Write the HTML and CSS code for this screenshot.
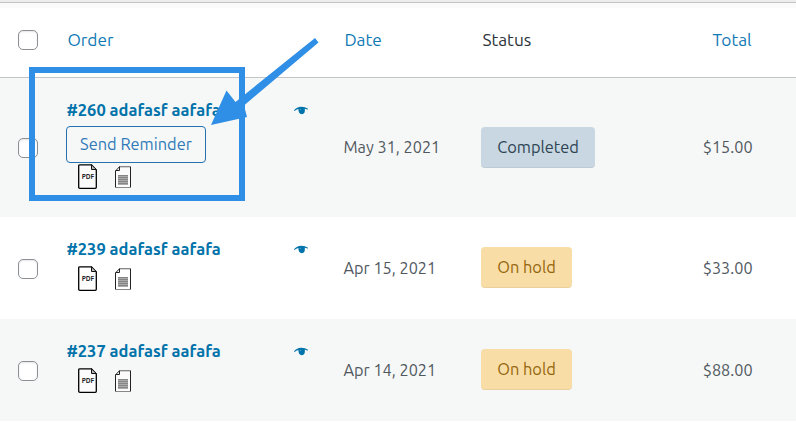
FILE: index.html
```html
<!DOCTYPE html>
<html lang="en">
<head>
<meta charset="utf-8">
<title>Orders</title>
<link rel="stylesheet" href="styles.css">
</head>
<body>
<svg class="sprite" aria-hidden="true">
  <symbol id="pdf" viewBox="0 0 20 26">
    <path d="M2 .8H13.5L18.3 6V23.3Q18.3 24.3 17.3 24.3H2Q.7 24.3 .7 23.3V2Q.7 .8 2 .8Z" fill="#fff" fill-opacity=".65" stroke="#000" stroke-width="1.3"/>
    <path d="M13.5 .8V5.5H18.3Z" fill="#bbb" stroke="#111" stroke-width="1"/>
  </symbol>
  <symbol id="doc" viewBox="0 0 17 23">
    <path d="M4.5 .7H15.5V21.5H.5V5Z" fill="#fff" fill-opacity=".5" stroke="#222" stroke-width="1"/>
    <path d="M4.5 .7V4.5H.6" fill="none" stroke="#222" stroke-width="1"/>
    <path d="M5 .5H16M0 21.5H16" stroke="#888" stroke-width="1"/>
    <path d="M3 9H13V19H3Z" fill="#aaa"/>
    <path d="M3 9.5H13M3 11.5H13M3 13.5H13M3 15.5H13M3 17.5H13" stroke="#858585"/>
  </symbol>
  <symbol id="eye" viewBox="0 0 14 9">
    <path d="M0 4.2Q3 .8 7 .7Q11 .6 14 2.8L13.6 3.8Q12 2.8 10.8 2.7Q11.5 8.1 7.8 8.2Q4.3 8.1 4.4 3Q2.3 3.5 .5 4.9Z" fill="#0073aa"/>
    <circle cx="6.3" cy="3.3" r=".5" fill="#8fc0d9"/>
  </symbol>
</svg>
<main class="orders">
  <div class="topbar"></div>
  <header class="row head">
    <span class="check"></span>
    <a class="h-order">Order</a>
    <a class="h-date">Date</a>
    <span class="h-status">Status</span>
    <a class="h-total">Total</a>
  </header>
  <section class="row tall striped">
    <span class="check"></span>
    <div class="order">
      <div class="title"><strong>#260 adafasf aafafa</strong><svg class="eye"><use href="#eye"/></svg></div>
      <a class="button">Send Reminder</a>
      <div class="docs"><span class="pdf"><svg><use href="#pdf"/></svg><b>PDF</b></span><svg class="doc"><use href="#doc"/></svg></div>
    </div>
    <span class="date">May 31, 2021</span>
    <div class="status"><span class="badge completed">Completed</span></div>
    <span class="total">$15.00</span>
  </section>
  <section class="row">
    <span class="check"></span>
    <div class="order">
      <div class="title"><strong>#239 adafasf aafafa</strong><svg class="eye"><use href="#eye"/></svg></div>
      <div class="docs"><span class="pdf"><svg><use href="#pdf"/></svg><b>PDF</b></span><svg class="doc"><use href="#doc"/></svg></div>
    </div>
    <span class="date">Apr 15, 2021</span>
    <div class="status"><span class="badge hold">On hold</span></div>
    <span class="total">$33.00</span>
  </section>
  <section class="row striped">
    <span class="check"></span>
    <div class="order">
      <div class="title"><strong>#237 adafasf aafafa</strong><svg class="eye"><use href="#eye"/></svg></div>
      <div class="docs"><span class="pdf"><svg><use href="#pdf"/></svg><b>PDF</b></span><svg class="doc"><use href="#doc"/></svg></div>
    </div>
    <span class="date">Apr 14, 2021</span>
    <div class="status"><span class="badge hold">On hold</span></div>
    <span class="total">$88.00</span>
  </section>
  <svg class="callout" viewBox="0 0 796 426" aria-hidden="true">
    <rect x="32" y="70" width="210" height="128" fill="none" stroke="#2f8fe6" stroke-width="6"/>
    <path d="M315 38L318.5 42.5L244 105.5L247 117L211 125L226.5 90.5L235.5 102Z" fill="#2f8fe6"/>
  </svg>
</main>
</body>
</html>
```
FILE: styles.css
```css
* { box-sizing: border-box; }
body {
  margin: 0;
  background: #fff;
  color: #50575e;
  font: 16.25px/22px Ubuntu, "Noto Sans", sans-serif;
}
.sprite { position: absolute; width: 0; height: 0; }
.orders { position: relative; width: 796px; height: 426px; overflow: hidden; }
.topbar { height: 3px; background: #ececed; border-bottom: 1px solid #c3c4c7; }
.row {
  display: grid;
  grid-template-columns: 49px 276px 138px 190px 81.6px;
  align-items: center;
  height: 102px;
  padding-left: 18px;
}
.tall { height: 139px; }
.striped { background: #f6f7f7; }
.head {
  height: 75px;
  padding-bottom: 1px;
  border-bottom: 1px solid #c3c4c7;
  background: linear-gradient(#fbfbfc 0 5px, #fff 5px);
  color: #2c3338;
  font-size: 17.3px;
}
.head a { color: #0f7ab5; }
.h-order { padding-left: .4px; }
.h-date, .h-status { padding-left: 1.4px; }
.h-total { padding-right: 1px; text-align: right; }
.check {
  width: 20px;
  height: 20px;
  margin-top: 1px;
  border: 1px solid #8c8f94;
  border-radius: 5px;
  background: #fff;
  box-shadow: inset 0 1px 2px rgba(0, 0, 0, .1);
}
.order { align-self: start; padding-top: 21px; }
.title { display: flex; align-items: center; justify-content: space-between; height: 22px; padding-right: 35px; }
.title strong { margin-left: -.6px; color: #0073aa; font-size: 16.5px; }
.eye { width: 14px; height: 9px; }
.button {
  display: flex;
  align-items: center;
  justify-content: center;
  width: 140px;
  height: 37px;
  margin: 5px 0 0 -1px;
  padding-bottom: 1px;
  border: 1px solid #2271b1;
  border-radius: 4px;
  color: #2e7ab9;
  font-size: 16.4px;
}
.docs { display: flex; align-items: center; gap: 17px; height: 26px; margin: 6px 0 0 11px; }
.button + .docs { margin-top: 1px; }
.pdf { display: grid; width: 20px; height: 26px; }
.pdf svg, .pdf b { grid-area: 1 / 1; }
.pdf svg { width: 20px; height: 26px; }
.pdf b { color: #222; font: bold 6.5px/25px Ubuntu, "Noto Sans", sans-serif; text-align: center; }
.doc { width: 17px; height: 23px; }
.date, .total { padding-bottom: 1px; }
.date { padding-left: .5px; }
.status { padding-bottom: 1px; }
.tall .status { padding-bottom: 0; }
.badge {
  display: inline-flex;
  align-items: center;
  justify-content: center;
  height: 41px;
  border-bottom: 1px solid rgba(0, 0, 0, .06);
  border-radius: 4px;
  font-size: 16.4px;
  vertical-align: top;
}
.completed { width: 114px; background: #c8d7e1; color: #2e4453; }
.hold { width: 91px; background: #f8dda7; color: #94660c; }
.total { text-align: right; }
.callout { position: absolute; inset: 0; width: 796px; height: 426px; }
```
